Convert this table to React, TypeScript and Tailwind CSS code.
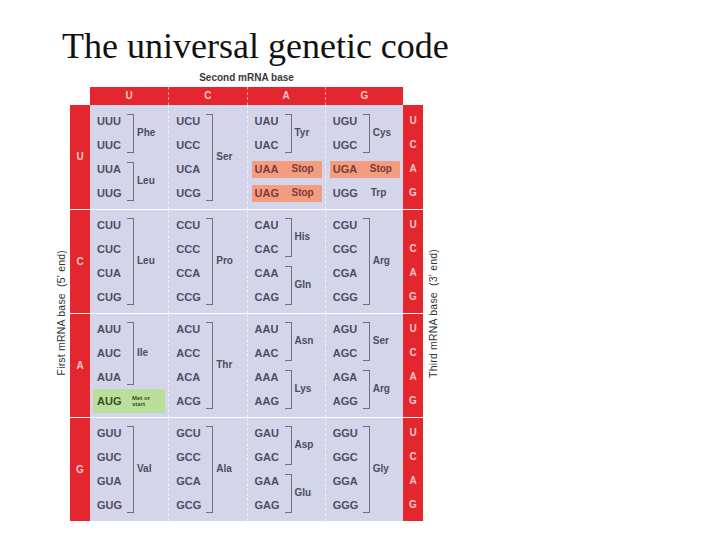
import React from "react";

type Group =
  | { t: "b"; codons: string[]; aa: string }
  | { t: "n"; codon: string; aa: string }
  | { t: "stop"; codon: string }
  | { t: "start"; codon: string };

const bases = ["U", "C", "A", "G"];
const four = (p: string) => bases.map((b) => p + b);

const table: Group[][][] = [
  [
    [
      { t: "b", codons: ["UUU", "UUC"], aa: "Phe" },
      { t: "b", codons: ["UUA", "UUG"], aa: "Leu" },
    ],
    [{ t: "b", codons: four("UC"), aa: "Ser" }],
    [
      { t: "b", codons: ["UAU", "UAC"], aa: "Tyr" },
      { t: "stop", codon: "UAA" },
      { t: "stop", codon: "UAG" },
    ],
    [
      { t: "b", codons: ["UGU", "UGC"], aa: "Cys" },
      { t: "stop", codon: "UGA" },
      { t: "n", codon: "UGG", aa: "Trp" },
    ],
  ],
  [
    [{ t: "b", codons: four("CU"), aa: "Leu" }],
    [{ t: "b", codons: four("CC"), aa: "Pro" }],
    [
      { t: "b", codons: ["CAU", "CAC"], aa: "His" },
      { t: "b", codons: ["CAA", "CAG"], aa: "Gln" },
    ],
    [{ t: "b", codons: four("CG"), aa: "Arg" }],
  ],
  [
    [
      { t: "b", codons: ["AUU", "AUC", "AUA"], aa: "Ile" },
      { t: "start", codon: "AUG" },
    ],
    [{ t: "b", codons: four("AC"), aa: "Thr" }],
    [
      { t: "b", codons: ["AAU", "AAC"], aa: "Asn" },
      { t: "b", codons: ["AAA", "AAG"], aa: "Lys" },
    ],
    [
      { t: "b", codons: ["AGU", "AGC"], aa: "Ser" },
      { t: "b", codons: ["AGA", "AGG"], aa: "Arg" },
    ],
  ],
  [
    [{ t: "b", codons: four("GU"), aa: "Val" }],
    [{ t: "b", codons: four("GC"), aa: "Ala" }],
    [
      { t: "b", codons: ["GAU", "GAC"], aa: "Asp" },
      { t: "b", codons: ["GAA", "GAG"], aa: "Glu" },
    ],
    [{ t: "b", codons: four("GG"), aa: "Gly" }],
  ],
];

const codonCls = "text-[11px] font-bold text-[#4c4e62] leading-none";
const aaCls = "text-[10px] font-bold text-[#4c4e62] leading-none";

function GroupView({ g }: { g: Group }) {
  if (g.t === "b") {
    return (
      <div className="flex pl-[7px]">
        <div className="flex flex-col w-[30px]">
          {g.codons.map((c) => (
            <div key={c} className="h-[24px] flex items-center">
              <span className={codonCls}>{c}</span>
            </div>
          ))}
        </div>
        <div className="w-[7px] mt-[5px] mb-[4px] border-y-[1.5px] border-r-[1.5px] border-[#6e7083]" />
        <div className="flex items-center pl-[3px]">
          <span className={aaCls}>{g.aa}</span>
        </div>
      </div>
    );
  }
  if (g.t === "n") {
    return (
      <div className="flex items-center h-[24px] pl-[7px]">
        <span className={codonCls + " w-[38px]"}>{g.codon}</span>
        <span className={aaCls}>{g.aa}</span>
      </div>
    );
  }
  if (g.t === "stop") {
    return (
      <div className="flex items-center h-[24px] pl-[4px] pr-[3px]">
        <div className="flex items-center w-full h-[17px] bg-[#f29c80] pl-[3px]">
          <span className="text-[11px] font-bold text-[#7c3b33] leading-none w-[37px]">{g.codon}</span>
          <span className="text-[10px] font-bold text-[#7c3b33] leading-none">Stop</span>
        </div>
      </div>
    );
  }
  return (
    <div className="flex items-center h-[24px] ml-[3px] w-[72px] bg-[#badf9b] pl-[4px]">
      <span className="text-[11px] font-bold text-[#344f28] leading-none w-[35px]">{g.codon}</span>
      <span className="text-[6px] font-bold text-[#344f28] leading-[6.5px] w-[24px]">Met or start</span>
    </div>
  );
}

export default function App() {
  return (
    <div
      className="w-[720px] h-[539px] bg-white overflow-hidden"
      style={{ fontFamily: '"Liberation Sans", Arial, sans-serif' }}
    >
      {/* Title */}
      <h1
        className="pt-[28px] pl-[62px] text-[36px] leading-[36px] text-[#111] font-normal"
        style={{ fontFamily: '"Liberation Serif", "Times New Roman", serif' }}
      >
        The universal genetic code
      </h1>

      {/* Second base label + header */}
      <div className="ml-[90px] w-[313px] mt-[8px] text-center text-[10px] leading-[12px] font-bold text-[#3a3a3a]">
        Second mRNA base
      </div>
      <div className="ml-[90px] w-[313px] mt-[3px] h-[18px] grid grid-cols-4 bg-[#e4262f]">
        {bases.map((b, i) => (
          <div
            key={b}
            className={
              i === 0
                ? "flex items-center justify-center"
                : "flex items-center justify-center border-l border-dashed border-white/50"
            }
          >
            <span className="text-[10px] font-bold text-[#f9c8c8] leading-none">{b}</span>
          </div>
        ))}
      </div>

      {/* Table body */}
      <div className="flex ml-[52px]">
        <div className="w-[18px] flex items-center justify-center">
          <span className="[writing-mode:vertical-rl] rotate-180 text-[10.5px] leading-none text-[#333] whitespace-nowrap tracking-[0.2px]">
            First mRNA base&nbsp; (5' end)
          </span>
        </div>

        <div className="flex flex-col w-[353px]">
          {table.map((row, ri) => (
            <div
              key={ri}
              className={
                ri === 0
                  ? "flex h-[104px]"
                  : "flex h-[104px] border-t border-dashed border-white/60"
              }
            >
              <div className="w-[20px] bg-[#e4262f] flex items-center justify-center">
                <span className="text-[10px] font-bold text-[#f9c8c8] leading-none">{bases[ri]}</span>
              </div>
              <div className="w-[313px] grid grid-cols-4 bg-[#d4d4ea]">
                {row.map((cell, ci) => (
                  <div
                    key={ci}
                    className={
                      (ri === 0 ? "pt-[4px] " : "pt-[3px] ") +
                      (ci === 0
                        ? "flex flex-col"
                        : "flex flex-col border-l border-dashed border-white/60")
                    }
                  >
                    {cell.map((g, gi) => (
                      <GroupView key={gi} g={g} />
                    ))}
                  </div>
                ))}
              </div>
              <div
                className={
                  ri === 0
                    ? "w-[20px] bg-[#e4262f] flex flex-col pt-[4px]"
                    : "w-[20px] bg-[#e4262f] flex flex-col pt-[3px]"
                }
              >
                {bases.map((b) => (
                  <div key={b} className="h-[24px] flex items-center justify-center">
                    <span className="text-[10px] font-bold text-[#f9c8c8] leading-none">{b}</span>
                  </div>
                ))}
              </div>
            </div>
          ))}
        </div>

        <div className="w-[20px] flex items-center justify-center">
          <span className="[writing-mode:vertical-rl] rotate-180 text-[10.5px] leading-none text-[#333] whitespace-nowrap tracking-[0.2px]">
            Third mRNA base&nbsp; (3' end)
          </span>
        </div>
      </div>
    </div>
  );
}
